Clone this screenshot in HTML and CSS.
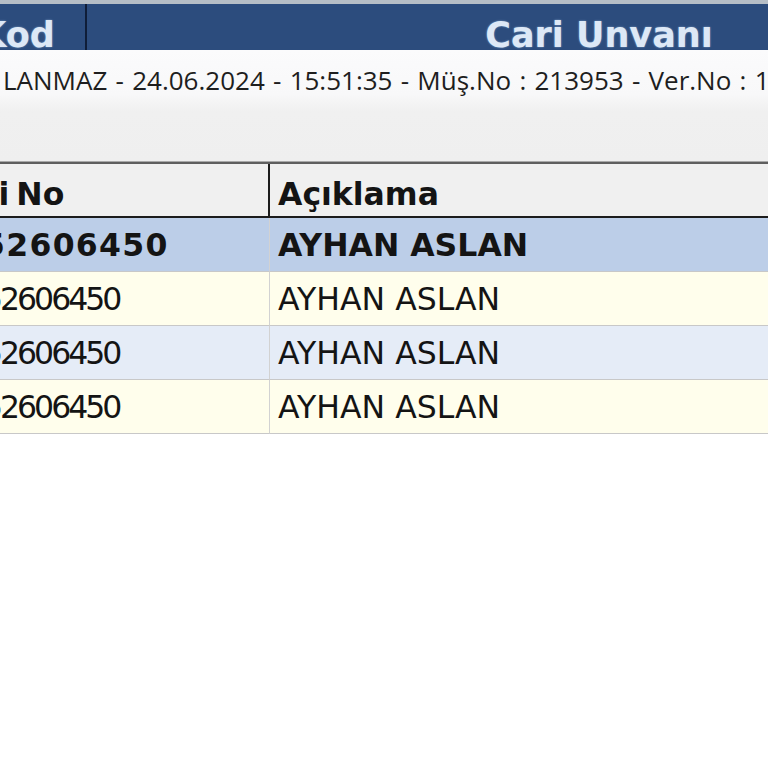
FILE: index.html
```html
<!DOCTYPE html>
<html lang="tr">
<head>
<meta charset="utf-8">
<title>Cari Liste</title>
<link rel="stylesheet" href="styles.css">
</head>
<body>
<div class="page">
  <div class="titlebar">
    <div class="tcol tcol-kod">Kod</div>
    <div class="tcol tcol-unvan">Cari Unvanı</div>
  </div>
  <div class="status">
    <div class="status-text">LANMAZ - 24.06.2024 - 15:51:35 - Müş.No : 213953 - Ver.No : 1</div>
  </div>
  <div class="grid">
    <div class="gh gh-no"><span class="gh-label">Seri No</span></div>
    <div class="gh gh-desc">Açıklama</div>

    <div class="gc gc-no row-sel">52606450</div>
    <div class="gc gc-desc row-sel">AYHAN ASLAN</div>

    <div class="gc gc-no row-cream">52606450</div>
    <div class="gc gc-desc row-cream">AYHAN ASLAN</div>

    <div class="gc gc-no row-blue">52606450</div>
    <div class="gc gc-desc row-blue">AYHAN ASLAN</div>

    <div class="gc gc-no row-cream">52606450</div>
    <div class="gc gc-desc row-cream">AYHAN ASLAN</div>
  </div>
</div>
</body>
</html>
```
FILE: styles.css
```css
html, body {
  margin: 0;
  padding: 0;
  background: #ffffff;
  overflow: hidden;
}
.page {
  width: 768px;
  height: 768px;
  overflow: hidden;
  white-space: nowrap;
}

/* top dark blue column header */
.titlebar {
  display: flex;
  height: 50px;
  box-sizing: border-box;
  border-top: 4px solid #b6bec6;
  background: #2c4c7d;
  overflow: hidden;
}
.tcol {
  flex: none;
  box-sizing: border-box;
  height: 46px;
  padding-top: 14px;
  line-height: 35px;
  font-family: "DejaVu Sans", sans-serif;
  font-weight: bold;
  font-size: 35px;
  text-align: center;
  color: #dde8f6;
  text-shadow: 0 0 2px rgba(170, 200, 235, 0.7);
}
.tcol-kod {
  width: 138px;
  margin-left: -51px;
  border-right: 2px solid #0f1d38;
}
.tcol-unvan {
  width: 1024px;
}

/* status / info strip */
.status {
  height: 112px;
  box-sizing: border-box;
  padding: 15px 0 0 3px;
  background: linear-gradient(to bottom, #fbfbfc 0%, #f8f8f9 40%, #f0f0f0 55%, #efefef 100%);
  border-bottom: 1px solid #a9a9a9;
}
.status-text {
  font-family: "Open Sans", sans-serif;
  font-size: 26px;
  line-height: 30px;
  word-spacing: 1.5px;
  color: #1e1e1e;
}

/* data grid */
.grid {
  display: grid;
  grid-template-columns: 295px 1000px;
  margin-left: -25px;
  font-family: "DejaVu Sans", sans-serif;
  font-size: 31.5px;
  color: #141414;
  border-top: 2px solid #5f5f5f;
}
.gh {
  box-sizing: border-box;
  height: 54px;
  padding: 10px 8px 2px;
  line-height: 40px;
  font-weight: bold;
  background: #f0f0f0;
  border-bottom: 2px solid #1c1c1c;
  overflow: hidden;
}
.gh-no {
  border-right: 2px solid #1c1c1c;
}
.gh-label {
  display: inline-block;
  margin-left: -44px;
  word-spacing: -4px;
}
.gc {
  box-sizing: border-box;
  height: 54px;
  padding: 1px 8px 0;
  line-height: 53px;
  border-bottom: 1px solid #c8c8c8;
  overflow: hidden;
}
.gc-no {
  border-right: 1px solid #d2d2d2;
  letter-spacing: -3px;
}
.row-sel {
  background: #bccee8;
  font-weight: bold;
}
.gc-no.row-sel {
  letter-spacing: 1.3px;
}
.row-cream {
  background: #fffeec;
}
.row-blue {
  background: #e5ecf7;
}
```
